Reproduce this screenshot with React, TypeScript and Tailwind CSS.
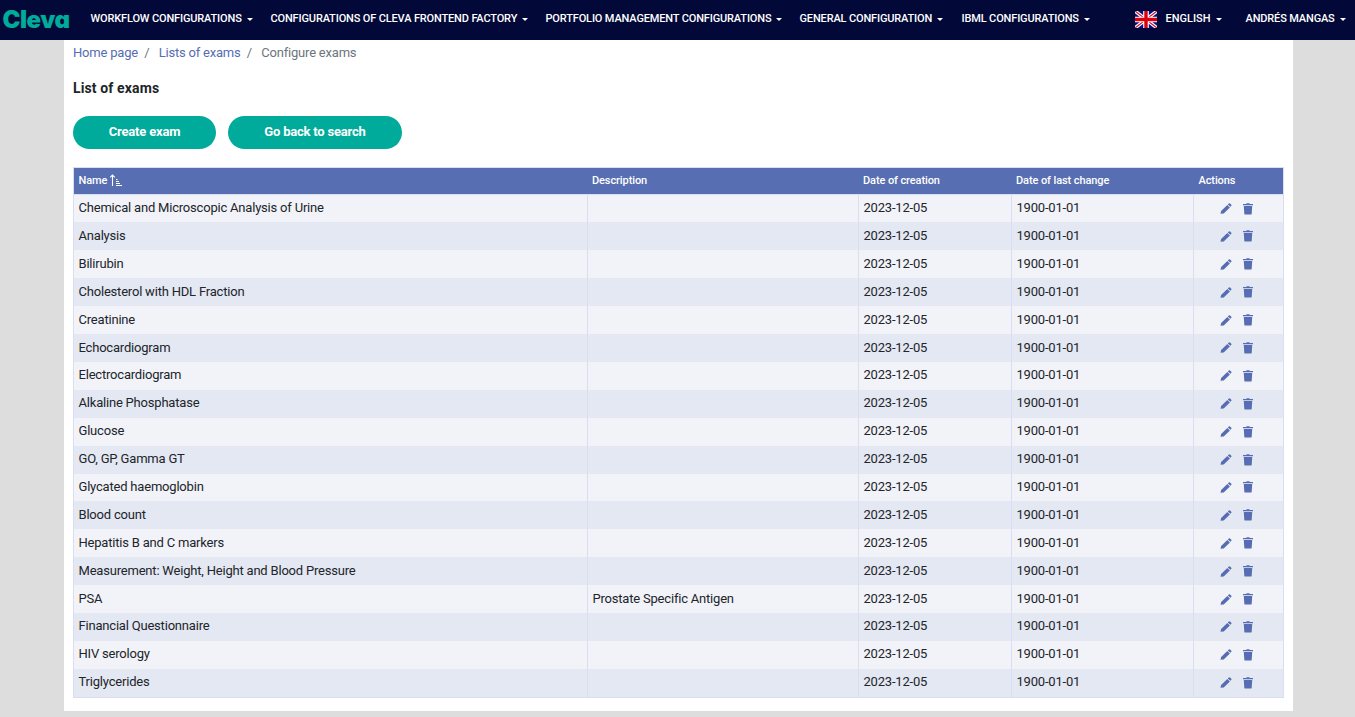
import React from 'react';

const nav = [
  { label: 'WORKFLOW CONFIGURATIONS', width: 'w-[180px]' },
  { label: 'CONFIGURATIONS OF CLEVA FRONTEND FACTORY', width: 'w-[275px]' },
  { label: 'PORTFOLIO MANAGEMENT CONFIGURATIONS', width: 'w-[254px]' },
  { label: 'GENERAL CONFIGURATION', width: 'w-[162px]' },
  { label: 'IBML CONFIGURATIONS', width: 'w-[173px]' },
];

const exams = [
  'Chemical and Microscopic Analysis of Urine',
  'Analysis',
  'Bilirubin',
  'Cholesterol with HDL Fraction',
  'Creatinine',
  'Echocardiogram',
  'Electrocardiogram',
  'Alkaline Phosphatase',
  'Glucose',
  'GO, GP, Gamma GT',
  'Glycated haemoglobin',
  'Blood count',
  'Hepatitis B and C markers',
  'Measurement: Weight, Height and Blood Pressure',
  'PSA',
  'Financial Questionnaire',
  'HIV serology',
  'Triglycerides',
];

const columns = 'grid grid-cols-[514px_271px_153px_182px_89px]';
const cell = 'border-r border-[#d9def2] pt-[0.53px] pl-[4.500px]';

function Caret() {
  return <span className="ml-[5px] h-0 w-0 border-x-[3px] border-t-[3px] border-x-transparent border-t-white" />;
}

function Flag() {
  return (
    <svg className="h-[17px] w-[22px] shrink-0" viewBox="0 0 22 17">
      <path fill="#00128a" d="M0 0h22v17H0z" />
      <path stroke="#fff" strokeWidth="3.4" d="m0 0 22 17M22 0 0 17" />
      <path stroke="#d80d20" strokeWidth="1.2" d="m0 0 22 17M22 0 0 17" />
      <path stroke="#fff" strokeWidth="5.600" d="M11 0v17M0 8.500h22" />
      <path stroke="#d8000d" strokeWidth="3.400" d="M11 0v17M0 8.500h22" />
    </svg>
  );
}

function SortIcon() {
  return (
    <svg className="ml-[3px] h-[13px] w-[12px]" viewBox="0 0 12 13" fill="none" stroke="#fff">
      <path d="M2.500 12V1M.2 3.300 2.500 1l2.300 2.300" strokeWidth="1.100" />
      <path d="M6 5.500h1.500M6 7.500h3M6 9.500h4M6 11.500h6" strokeWidth="1" />
    </svg>
  );
}

function Pencil() {
  return (
    <svg className="h-[11px] w-[12px]" viewBox="0 0 12 11" fill="#566db3">
      <path d="M.5 10.800 1.100 7.900 7.300 1.900l2.600 2.500-6.200 6zM7.800 1.400l1-.95a.9.900 0 0 1 1.200 0l1.300 1.250a.8.800 0 0 1 0 1.150l-.95.950z" />
    </svg>
  );
}

function Trash() {
  return (
    <svg className="h-[12px] w-[10px]" viewBox="0 0 10 12" fill="#566db3">
      <path d="M0 1h3.200L3.700.2h2.600L6.800 1H10v1.200H0zM.8 3h8.400l-.5 7.700a1 1 0 0 1-1 .9H2.300a1 1 0 0 1-1-.9z" />
    </svg>
  );
}

export default function App() {
  return (
    <div className="flex h-[717px] w-[1355px] flex-col overflow-hidden bg-[#dddddd] font-['Roboto',sans-serif] text-[#212529]">
      <header className="flex h-10 shrink-0 items-center bg-[#020838] pb-[2px] text-[11px] font-medium tracking-[-0.15px] whitespace-nowrap text-white">
        <div className="w-[90.500px] pt-[1px] pl-[2.500px] font-['Inter',sans-serif] text-[24px] leading-none font-black tracking-[-0.5px] text-[#00ab9b] [font-feature-settings:'cv11']">Cleva</div>
        {nav.map((n) => (
          <div key={n.label} className={'flex items-center ' + n.width}>
            {n.label}
            <Caret />
          </div>
        ))}
        <div className="flex w-[111px] items-center">
          <Flag />
          <span className="ml-[9px] tracking-normal">ENGLISH</span>
          <Caret />
        </div>
        <div className="flex items-center">
          ANDRÉS MANGAS
          <Caret />
        </div>
      </header>

      <main className="ml-16 h-[671px] w-[1229px] bg-white pl-[9px]">
        <nav className="flex h-[25px] items-center text-[13px] tracking-[-0.2px] text-[#6c757d]">
          <span className="text-[#566db3]">Home page</span>
          <span className="mr-[7px] ml-[6.200px]">/</span>
          <span className="ml-[2.300px] text-[#566db3]">Lists of exams</span>
          <span className="mr-[7px] ml-[6.200px]">/</span>
          <span className="ml-[2.300px]">Configure exams</span>
        </nav>
        <h1 className="mt-[13px] h-[20px] text-[14px] leading-[20px] font-bold tracking-[0.13px]">List of exams</h1>
        <div className="mt-[18px] flex gap-3 text-[13px] font-bold tracking-[-0.2px] text-white">
          <button className="h-[33px] w-[143px] rounded-full bg-[#00ab9b] pb-[2px]">Create exam</button>
          <button className="h-[33px] w-[174px] rounded-full bg-[#00ab9b] pb-[2px]">Go back to search</button>
        </div>

        <div className="mt-[18px] w-[1211px] border border-[#d9def2]">
          <div className={columns + ' h-[26.600px] items-center border-b border-[#d9def2] bg-[#586eb3] text-[11px] font-medium tracking-[-0.1px] text-white'}>
            <div className="flex items-center pl-[4.500px]">
              Name
              <SortIcon />
            </div>
            <div className="pl-[4px]">Description</div>
            <div className="pl-[4px]">Date of creation</div>
            <div className="pl-[4px]">Date of last change</div>
            <div className="pl-[4.500px]">Actions</div>
          </div>
          {exams.map((name) => (
            <div key={name} className={columns + ' h-[27.900px] text-[13px] leading-[26.060px] tracking-[-0.2px] even:bg-[#f2f3f9] odd:bg-[#e4e8f3]'}>
              <div className={cell}>{name}</div>
              <div className={cell}>{name === 'PSA' ? 'Prostate Specific Antigen' : ''}</div>
              <div className={cell}>2023-12-05</div>
              <div className={cell}>1900-01-01</div>
              <div className="flex items-center gap-[11px] pl-[26.400px]">
                <Pencil />
                <Trash />
              </div>
            </div>
          ))}
        </div>
      </main>
    </div>
  );
}
